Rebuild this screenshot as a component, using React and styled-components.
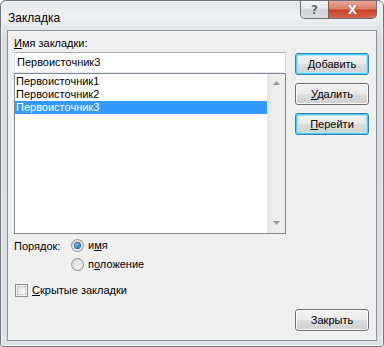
import React from "react";
import styled, { createGlobalStyle } from "styled-components";

const Global = createGlobalStyle`
  html, body { margin: 0; padding: 0; background: #ffffff; }
  body { font-family: "Liberation Sans", Arial, sans-serif; }
`;

const Window = styled.div`
  box-sizing: border-box;
  width: 384px;
  height: 347px;
  display: flex;
  flex-direction: column;
  padding: 0 6px 5px 6px;
  border: 1px solid #6f7378;
  border-radius: 6px 6px 3px 3px;
  background: linear-gradient(180deg, #e6e8ea 0px, #eef0f2 16px, #d9dde1 40px, #dfe3e7 100%);
  box-shadow: inset 0 0 0 1px #f4f6f8;
`;

const TitleBar = styled.div`
  height: 29px;
  display: flex;
  align-items: flex-start;
`;

const Title = styled.div`
  font-family: "Liberation Sans", Arial, sans-serif;
  font-size: 12px;
  color: #000;
  padding: 10px 0 0 1px;
  flex: 1;
`;

const Caption = styled.div`
  display: flex;
  border: 1px solid #6d7177;
  border-top: none;
  border-radius: 0 0 5px 5px;
  overflow: hidden;
  height: 17px;
`;

const CapButton = styled.div`
  width: ${(p) => p.$w}px;
  height: 17px;
  display: flex;
  align-items: center;
  justify-content: center;
  background: ${(p) =>
    p.$red
      ? "linear-gradient(180deg, #e9a99c 0%, #dd806c 45%, #c8432a 55%, #d6654b 100%)"
      : "linear-gradient(180deg, #f4f5f6 0%, #e3e6e9 45%, #cdd2d7 55%, #dde1e5 100%)"};
  border-left: ${(p) => (p.$red ? "1px solid #8a5a52" : "none")};
  font-family: "DejaVu Sans", sans-serif;
  font-weight: bold;
  font-size: 12px;
  color: ${(p) => (p.$red ? "#ffffff" : "#5f6870")};
  text-shadow: ${(p) => (p.$red ? "0 0 1px #6b2316" : "0 0 1px #ffffff")};
`;

const Client = styled.div`
  flex: 1;
  box-sizing: border-box;
  background: #f0f0f0;
  border: 1px solid #8b8f94;
  padding: 6px 6px 9px 6px;
  display: flex;
  flex-direction: column;
  font-family: "Liberation Sans", Arial, sans-serif;
  font-size: 11px;
  color: #000;
`;

const TopRow = styled.div`
  display: flex;
  gap: 9px;
`;

const LeftCol = styled.div`
  width: 272px;
  display: flex;
  flex-direction: column;
`;

const Label = styled.div`
  line-height: 13px;
  height: 13px;
  margin-bottom: 2px;
  margin-left: 0;
`;

const Input = styled.div`
  box-sizing: border-box;
  height: 21px;
  border: 1px solid #abadb3;
  border-right-color: #dbdfe6;
  border-bottom-color: #e3e9ef;
  border-left-color: #e2e3ea;
  background: #fff;
  line-height: 18px;
  padding-left: 2px;
`;

const ListBox = styled.div`
  box-sizing: border-box;
  height: 161px;
  border: 1px solid #828790;
  background: #fff;
  display: flex;
`;

const Items = styled.div`
  flex: 1;
  padding-top: 1px;
`;

const Item = styled.div`
  height: 13px;
  line-height: 13px;
  padding-left: 1px;
  background: ${(p) => (p.$sel ? "#3399ff" : "transparent")};
  color: ${(p) => (p.$sel ? "#ffffff" : "#000")};
`;

const ScrollBar = styled.div`
  width: 17px;
  display: flex;
  flex-direction: column;
  justify-content: space-between;
  align-items: center;
  background: linear-gradient(90deg, #e3e3e3 0px, #ececec 3px, #eeeeee 100%);
  border-left: 1px solid #e8e8e8;
  padding: 7px 0 8px 0;
`;

const ButtonCol = styled.div`
  display: flex;
  flex-direction: column;
  gap: 8px;
  padding-top: 16px;
`;

const Button = styled.div`
  box-sizing: border-box;
  width: 74px;
  height: 22px;
  border-radius: 3px;
  border: 1px solid ${(p) => (p.$focus ? "#3c7fb1" : "#707070")};
  background: linear-gradient(180deg, #f2f2f2 0%, #ebebeb 48%, #dddddd 52%, #cfcfcf 100%);
  box-shadow: ${(p) =>
    p.$focus
      ? "inset 0 0 0 1px #48d0f8, inset 0 0 0 2px #a0e5fb"
      : "inset 0 0 0 1px #fcfcfc"};
  display: flex;
  align-items: center;
  justify-content: center;
  font-size: 11px;
  line-height: 13px;
`;

const U = styled.span`
  text-decoration: underline;
  text-underline-offset: 1px;
`;

const OrderRow = styled.div`
  display: flex;
  margin-top: 4px;
`;

const OrderLabel = styled.div`
  width: 57px;
  line-height: 14px;
  padding-top: 1px;
`;

const Radios = styled.div`
  display: flex;
  flex-direction: column;
  gap: 5px;
`;

const Option = styled.div`
  display: flex;
  align-items: center;
  gap: 4px;
  height: 14px;
  line-height: 14px;
`;

const Radio = styled.div`
  box-sizing: border-box;
  width: 13px;
  height: 13px;
  border-radius: 50%;
  border: 1px solid #8e8f8f;
  background: radial-gradient(circle at 60% 65%, #f6f6f6 0%, #dcdcdc 70%, #cfcfcf 100%);
  display: flex;
  align-items: center;
  justify-content: center;
  &::after {
    content: "";
    display: ${(p) => (p.$on ? "block" : "none")};
    width: 5px;
    height: 5px;
    border-radius: 50%;
    background: radial-gradient(circle at 40% 35%, #8ad4ff 0%, #1a7cc4 60%, #0b4f86 100%);
    box-shadow: 0 0 0 1px #2a5f8f;
  }
`;

const CheckRow = styled.div`
  display: flex;
  align-items: center;
  gap: 4px;
  margin-top: 12px;
  margin-left: 1px;
  height: 14px;
`;

const Check = styled.div`
  box-sizing: border-box;
  width: 13px;
  height: 13px;
  border: 1px solid #8e8f8f;
  background: #f4f4f4;
  box-shadow: inset 0 0 0 1px #f4f4f4, inset 0 0 0 2px #cfcfcf, inset 2px 2px 3px #c6c6c6;
`;

const Footer = styled.div`
  margin-top: auto;
  display: flex;
  justify-content: flex-end;
  padding-right: 1px;
`;

const Arrow = ({ up }) => (
  <svg width="7" height="4" viewBox="0 0 7 4">
    <polygon
      points={up ? "3.5,0 7,4 0,4" : "0,0 7,0 3.5,4"}
      fill="#9a9a9a"
    />
  </svg>
);

export default function App() {
  return (
    <>
      <Global />
      <Window>
        <TitleBar>
          <Title>Закладка</Title>
          <Caption>
            <CapButton $w={27}>?</CapButton>
            <CapButton $w={47} $red>
              X
            </CapButton>
          </Caption>
        </TitleBar>
        <Client>
          <TopRow>
            <LeftCol>
              <Label>
                <U>И</U>мя закладки:
              </Label>
              <Input>Первоисточник3</Input>
              <ListBox>
                <Items>
                  <Item>Первоисточник1</Item>
                  <Item>Первоисточник2</Item>
                  <Item $sel>Первоисточник3</Item>
                </Items>
                <ScrollBar>
                  <Arrow up />
                  <Arrow />
                </ScrollBar>
              </ListBox>
            </LeftCol>
            <ButtonCol>
              <Button $focus>
                <span>
                  <U>Д</U>обавить
                </span>
              </Button>
              <Button>
                <span>
                  <U>У</U>далить
                </span>
              </Button>
              <Button $focus>
                <span>
                  <U>П</U>ерейти
                </span>
              </Button>
            </ButtonCol>
          </TopRow>
          <OrderRow>
            <OrderLabel>Порядок:</OrderLabel>
            <Radios>
              <Option>
                <Radio $on />
                <span>
                  и<U>м</U>я
                </span>
              </Option>
              <Option>
                <Radio />
                <span>
                  п<U>о</U>ложение
                </span>
              </Option>
            </Radios>
          </OrderRow>
          <CheckRow>
            <Check />
            <span>
              <U>С</U>крытые закладки
            </span>
          </CheckRow>
          <Footer>
            <Button>Закрыть</Button>
          </Footer>
        </Client>
      </Window>
    </>
  );
}
